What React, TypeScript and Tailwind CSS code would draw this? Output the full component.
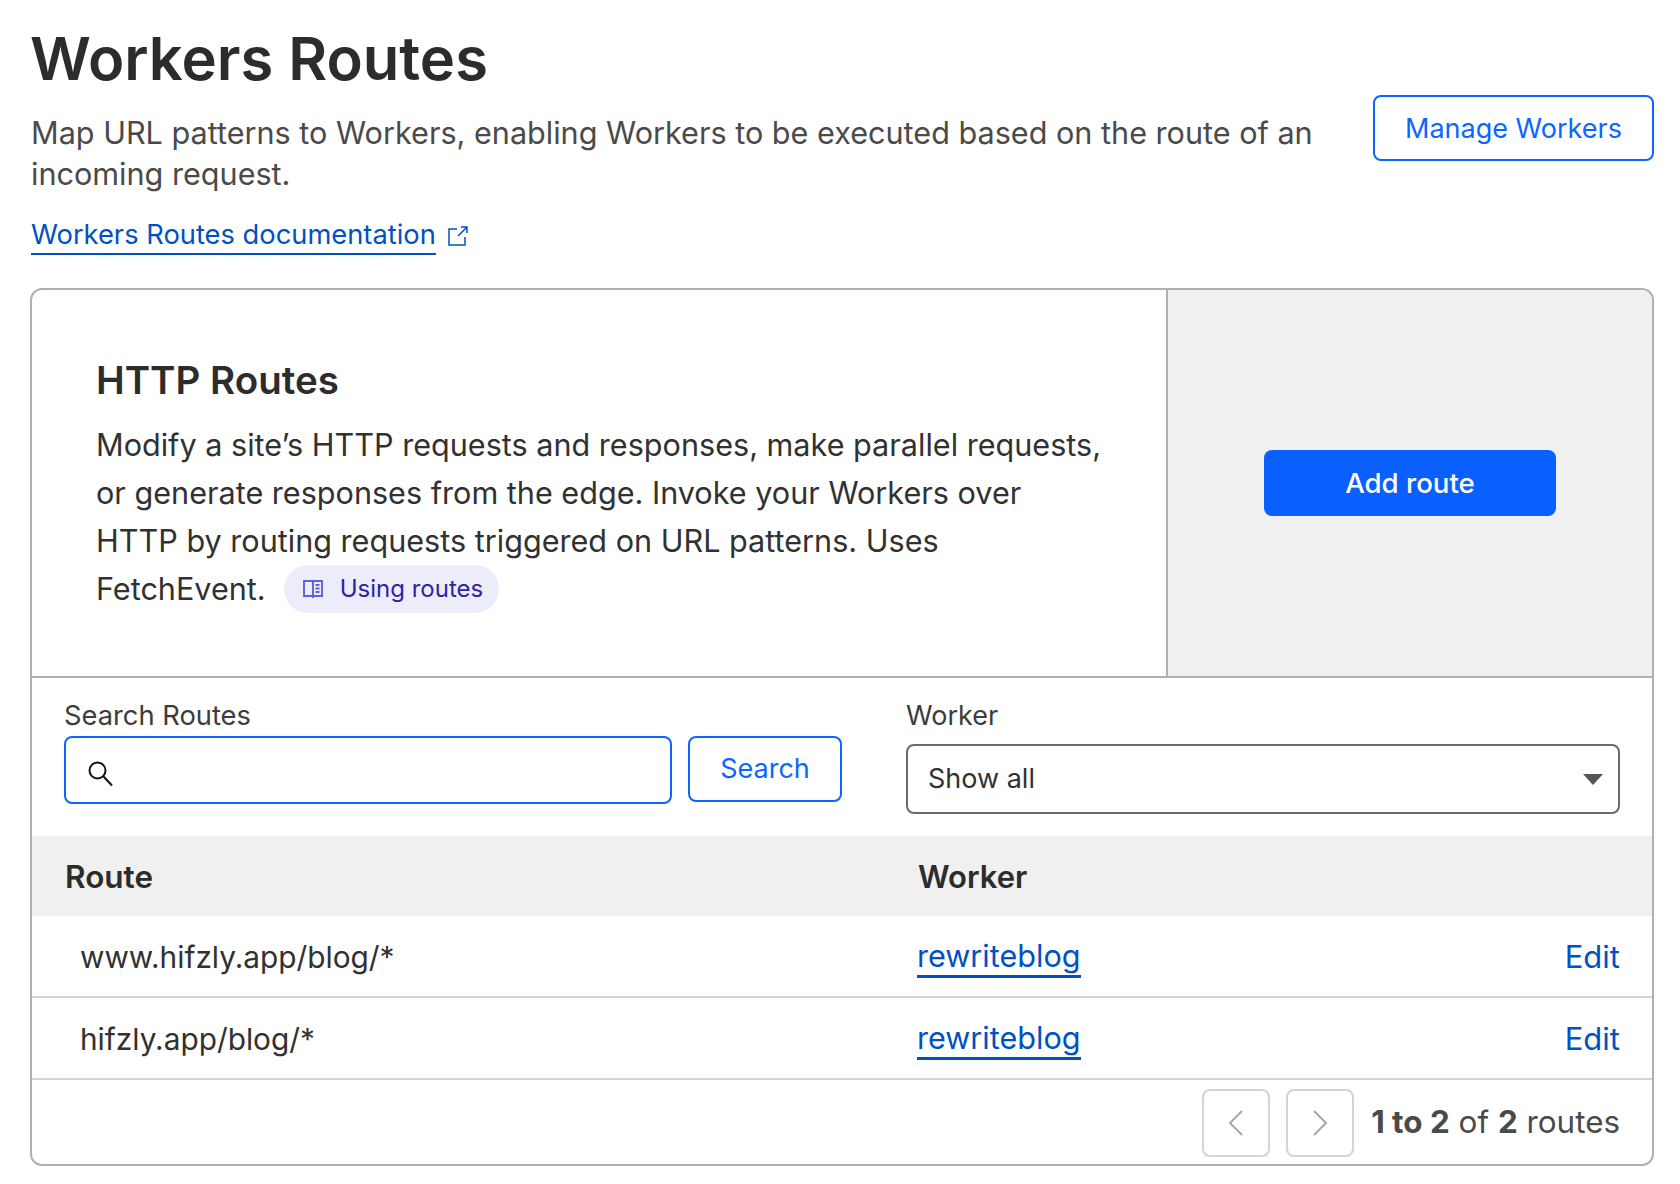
import React from "react";

const ExternalIcon = () => (
  <svg width="22" height="22" viewBox="0 0 22 22" fill="none" stroke="#0051c3" strokeWidth="1.5" className="ml-[11px] shrink-0">
    <path d="M10 4H2v16h16v-8" />
    <path d="M11 11 20 2M14 2h6v6" />
  </svg>
);

const BookIcon = () => (
  <svg width="22" height="22" viewBox="0 0 22 22" fill="none" stroke="#5f5fe0" strokeWidth="1.9">
    <path d="M11 3H2v15h9m0-15h9v15h-9m0-15v17" />
    <path d="M13.5 7h4M13.5 10.5h4M13.5 14h4" strokeWidth="2" />
  </svg>
);

const SearchIcon = () => (
  <svg width="28" height="28" viewBox="0 0 28 28" fill="none" stroke="#111" strokeWidth="2">
    <circle cx="11.5" cy="11.5" r="8" />
    <path d="m17.5 17.5 8.5 9" />
  </svg>
);

const Chevron = ({ d }: { d: string }) => (
  <svg width="18" height="28" viewBox="0 0 18 28" fill="none" stroke="#a8a8a8" strokeWidth="2">
    <path d={d} />
  </svg>
);

const Row = ({ route }: { route: string }) => (
  <div className="flex h-[82px] items-center border-b-2 border-[#d4d4d4] pl-[48px] pr-[32px] pt-[3px]">
    <div className="w-[837px] text-[29.8px] text-[#313131]">{route}</div>
    <a className="border-b-[3px] border-[#0051c3] text-[30.6px] leading-[38px] text-[#0051c3]">rewriteblog</a>
    <a className="ml-auto text-[31px] text-[#0051c3]">Edit</a>
  </div>
);

export default function App() {
  return (
    <div className="min-h-[1184px] bg-white pl-[30px] pr-[26px] font-['Inter',sans-serif] text-[#313131]">
      <div className="flex items-start justify-between pt-[20px]">
        <div className="w-[1310px]">
          <h1 className="text-[59.7px] font-semibold leading-[76px] text-[#2c2c2c]">Workers Routes</h1>
          <p className="ml-[1px] mt-[17px] text-[30.6px] leading-[40.5px] text-[#4a4a4a]">
            Map URL patterns to Workers, enabling Workers to be executed based on the route of an incoming request.
          </p>
          <div className="ml-[1px] mt-[22px] flex items-center">
            <a className="border-b-2 border-[#0051c3] text-[27.3px] leading-[37px] text-[#0051c3]">Workers Routes documentation</a>
            <ExternalIcon />
          </div>
        </div>
        <button className="mt-[75px] h-[66px] w-[281px] rounded-lg border-2 border-[#0a66ff] pt-[2px] text-[27px] text-[#0a66ff]">Manage Workers</button>
      </div>

      <div className="mt-[33px] h-[878px] overflow-hidden rounded-xl border-2 border-[#b0b0b0]">
        <div className="flex h-[388px] border-b-2 border-[#b0b0b0]">
          <div className="w-[1134px] pl-[64px] pt-[65px]">
            <h2 className="text-[38.5px] font-semibold leading-[50px] text-[#2c2c2c]">HTTP Routes</h2>
            <p className="mt-[16px] w-[1010px] text-[30.6px] leading-[48px] text-[#313131]">
              Modify a site’s HTTP requests and responses, make parallel requests, or generate responses from the edge. Invoke your Workers over HTTP by routing requests triggered on URL patterns. Uses FetchEvent.
              <span className="ml-[18px] inline-flex h-[48px] items-center gap-[16px] rounded-full bg-[#edecfb] pl-[18px] pr-[16px] align-top text-[24px] text-[#2e22a8]">
                <BookIcon />
                Using routes
              </span>
            </p>
          </div>
          <div className="flex flex-1 items-center justify-center border-l-2 border-[#b0b0b0] bg-[#f0f0f0]">
            <button className="h-[66px] w-[292px] rounded-lg bg-[#0a5fff] pt-[1px] text-[27.6px] font-medium text-white">Add route</button>
          </div>
        </div>

        <div className="flex h-[158px] pl-[32px] pr-[32px] pt-[21px]">
          <div className="w-[842px]">
            <div className="text-[27.3px] leading-[34px] text-[#3c3c3c]">Search Routes</div>
            <div className="mt-[3px] flex items-start">
              <div className="flex h-[68px] w-[608px] items-center rounded-lg border-2 border-[#0a66ff] pl-[20px] pt-[5px]">
                <SearchIcon />
              </div>
              <button className="ml-[16px] h-[66px] w-[154px] rounded-lg border-2 border-[#0a66ff] pt-[1px] text-[27px] text-[#0a66ff]">Search</button>
            </div>
          </div>
          <div className="flex-1">
            <div className="text-[27px] leading-[34px] text-[#3c3c3c]">Worker</div>
            <div className="mt-[11px] flex h-[70px] items-center justify-between rounded-lg border-2 border-[#6b6b6b] pl-[20px] pr-[15px] pt-[1px] text-[27px] text-[#313131]">
              Show all
              <svg width="20" height="11" viewBox="0 0 20 11" fill="#555"><path d="M0 0h20L10 11z" /></svg>
            </div>
          </div>
        </div>

        <div className="flex h-[80px] items-center bg-[#f0f0f0] pl-[33px] pt-[2px] font-semibold text-[#2c2c2c]">
          <div className="w-[853px] text-[31.5px]">Route</div>
          <div className="text-[31px]">Worker</div>
        </div>
        <Row route="www.hifzly.app/blog/*" />
        <Row route="hifzly.app/blog/*" />
        <div className="flex h-[85px] items-center justify-end pr-[32px]">
          <button className="flex h-[68px] w-[68px] items-center justify-center rounded-lg border-2 border-[#d4d4d4]">
            <Chevron d="M15 2 3 14l12 12" />
          </button>
          <button className="ml-[16px] flex h-[68px] w-[68px] items-center justify-center rounded-lg border-2 border-[#d4d4d4]">
            <Chevron d="m3 2 12 12L3 26" />
          </button>
          <div className="ml-[17px] text-[31.4px] text-[#4a4a4a]">
            <b className="font-bold">1 to 2</b> of <b className="font-bold">2</b> routes
          </div>
        </div>
      </div>
    </div>
  );
}
